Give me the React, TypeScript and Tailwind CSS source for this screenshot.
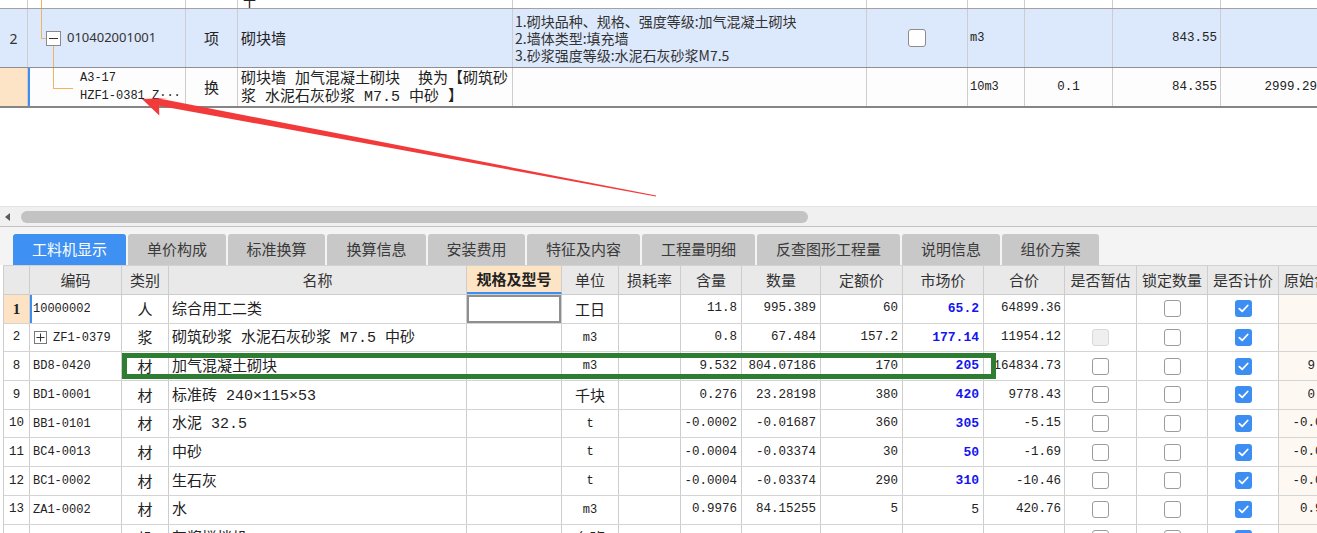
import React from 'react'

const TOP = ['w-[28px]', 'w-[158px]', 'w-[52px]', 'w-[275px]', 'w-[354px]', 'w-[101px]', 'w-[57px]', 'w-[88px]', 'w-[108px]', 'w-[100px]']
const BOT = ['w-[26px]', 'w-[92px]', 'w-[47px]', 'w-[298px]', 'w-[95px]', 'w-[57px]', 'w-[62px]', 'w-[61px]', 'w-[79px]', 'w-[82px]', 'w-[81px]', 'w-[81px]', 'w-[72px]', 'w-[71px]', 'w-[71px]', 'w-[68px]']

const MONO = "font-['Liberation_Mono','Noto_Sans_CJK_SC',monospace]"
const CJK = "font-['Noto_Sans_CJK_SC',sans-serif]"

function C({ w, className = '', children }: { w: string; className?: string; children?: React.ReactNode }) {
  return (
    <div className={`${w} shrink-0 h-full border-r border-[#cdcdcd] flex items-center overflow-hidden ${className}`}>
      {children}
    </div>
  )
}

function Check({ state }: { state: 'on' | 'off' | 'dis' | 'none' }) {
  if (state === 'none') return null
  if (state === 'on')
    return (
      <span className="w-[17px] h-[17px] rounded-[3px] bg-[#3c8ef3] flex items-center justify-center">
        <svg width="11" height="9" viewBox="0 0 11 9">
          <path d="M1.3 4.6 L4.2 7.3 L9.7 1.5" fill="none" stroke="white" strokeWidth="1.8" strokeLinecap="round" strokeLinejoin="round" />
        </svg>
      </span>
    )
  if (state === 'dis') return <span className="w-[17px] h-[17px] rounded-[3px] border border-[#d8d8d8] bg-[#efefef]" />
  return <span className="w-[17px] h-[17px] rounded-[3px] border border-[#9c9c9c] bg-white" />
}

type Row = {
  n: string; code: string; plus?: boolean; type: string; name: string; unit: string; unitCjk?: boolean
  hl: string; sl: string; de: string; sc: string; blue?: boolean; hj: string; zg: 'none' | 'off' | 'dis'; ys: string
}

const ROWS: Row[] = [
  { n: '1', code: '10000002', type: '人', name: '综合用工二类', unit: '工日', unitCjk: true, hl: '11.8', sl: '995.389', de: '60', sc: '65.2', blue: true, hj: '64899.36', zg: 'none', ys: '' },
  { n: '2', code: 'ZF1-0379', plus: true, type: '浆', name: '砌筑砂浆 水泥石灰砂浆 M7.5 中砂', unit: 'm3', hl: '0.8', sl: '67.484', de: '157.2', sc: '177.14', blue: true, hj: '11954.12', zg: 'dis', ys: '' },
  { n: '8', code: 'BD8-0420', type: '材', name: '加气混凝土砌块', unit: 'm3', hl: '9.532', sl: '804.07186', de: '170', sc: '205', blue: true, hj: '164834.73', zg: 'off', ys: '9.532' },
  { n: '9', code: 'BD1-0001', type: '材', name: '标准砖 240×115×53', unit: '千块', unitCjk: true, hl: '0.276', sl: '23.28198', de: '380', sc: '420', blue: true, hj: '9778.43', zg: 'off', ys: '0.276' },
  { n: '10', code: 'BB1-0101', type: '材', name: '水泥 32.5', unit: 't', hl: '-0.0002', sl: '-0.01687', de: '360', sc: '305', blue: true, hj: '-5.15', zg: 'off', ys: '-0.0002' },
  { n: '11', code: 'BC4-0013', type: '材', name: '中砂', unit: 't', hl: '-0.0004', sl: '-0.03374', de: '30', sc: '50', blue: true, hj: '-1.69', zg: 'off', ys: '-0.0004' },
  { n: '12', code: 'BC1-0002', type: '材', name: '生石灰', unit: 't', hl: '-0.0004', sl: '-0.03374', de: '290', sc: '310', blue: true, hj: '-10.46', zg: 'off', ys: '-0.0004' },
  { n: '13', code: 'ZA1-0002', type: '材', name: '水', unit: 'm3', hl: '0.9976', sl: '84.15255', de: '5', sc: '5', hj: '420.76', zg: 'off', ys: '0.9976' },
  { n: '', code: '', type: '机', name: '灰浆搅拌机', unit: '台班', unitCjk: true, hl: '', sl: '', de: '', sc: '', hj: '', zg: 'off', ys: '' },
]

const TABS = [
  { t: '工料机显示', w: 'w-[113px]' },
  { t: '单价构成', w: 'w-[98px]' },
  { t: '标准换算', w: 'w-[97px]' },
  { t: '换算信息', w: 'w-[99px]' },
  { t: '安装费用', w: 'w-[97px]' },
  { t: '特征及内容', w: 'w-[113px]' },
  { t: '工程量明细', w: 'w-[113px]' },
  { t: '反查图形工程量', w: 'w-[143px]' },
  { t: '说明信息', w: 'w-[98px]' },
  { t: '组价方案', w: 'w-[97px]' },
]

const HEAD = ['', '编码', '类别', '名称', '规格及型号', '单位', '损耗率', '含量', '数量', '定额价', '市场价', '合价', '是否暂估', '锁定数量', '是否计价', '原始含量']

export default function App() {
  return (
    <div className={`relative w-[1317px] h-[533px] overflow-hidden bg-white text-[#222] ${CJK}`}>
      {/* upper grid */}
      <div className="w-[1317px]">
        <div className="flex h-[9px] border-b border-[#a2a2a2]">
          <C w={TOP[0]} />
          <C w={TOP[1]} className="relative">
            <span className="absolute left-[13px] top-0 h-full w-px bg-[#f3b35e]" />
          </C>
          <C w={TOP[2]} />
          <C w={TOP[3]} className="items-end pl-[4px]">
            <span className="text-[15px] leading-[15px] -mb-[1px]">土</span>
          </C>
          <C w={TOP[4]} />
          <C w={TOP[5]} />
          <C w={TOP[6]} />
          <C w={TOP[7]} />
          <C w={TOP[8]} />
          <C w={TOP[9]} />
        </div>

        <div className="flex h-[59px] border-b border-[#8f8f8f] bg-[#dce8fb]">
          <C w={TOP[0]} className="justify-center text-[14px] font-['Noto_Sans',sans-serif] text-[#333]">2</C>
          <C w={TOP[1]} className="relative pl-[39px] text-[13px] font-['Noto_Sans',sans-serif] text-[#333]">
            <span className="absolute left-[13px] top-0 h-[29px] w-px bg-[#f3b35e]" />
            <span className="absolute left-[13px] top-[29px] h-px w-[5px] bg-[#f3b35e]" />
            <span className="absolute left-[25px] top-[37px] h-[22px] w-px bg-[#f3b35e]" />
            <span className="absolute left-[18px] top-[22px] w-[15px] h-[15px] border border-[#8a8a8a] bg-white flex items-center justify-center">
              <span className="w-[9px] h-px bg-[#333]" />
            </span>
            010402001001
          </C>
          <C w={TOP[2]} className="justify-center text-[15px]">项</C>
          <C w={TOP[3]} className="pl-[3px] text-[15px]">砌块墙</C>
          <C w={TOP[4]} className="pl-[2px] text-[14px] leading-[17px] text-[#333]">
            <div>
              <div>1.砌块品种、规格、强度等级:加气混凝土砌块</div>
              <div>2.墙体类型:填充墙</div>
              <div>3.砂浆强度等级:水泥石灰砂浆M7.5</div>
            </div>
          </C>
          <C w={TOP[5]} className="justify-center">
            <span className="w-[18px] h-[18px] rounded-[3px] border border-[#8c8c8c] bg-white" />
          </C>
          <C w={TOP[6]} className={`pl-[2px] text-[12px] ${MONO}`}>m3</C>
          <C w={TOP[7]} />
          <C w={TOP[8]} className={`justify-end pr-[3px] text-[12.5px] ${MONO}`}>843.55</C>
          <C w={TOP[9]} />
        </div>

        <div className="flex h-[40px] border-b-2 border-[#858585] bg-[#fdfdfd]">
          <C w={TOP[0]} className="bg-[#fde4c7]" />
          <C w={TOP[1]} className={`relative pl-[52px] text-[12px] leading-[18px] ${MONO}`}>
            <span className="absolute left-0 top-0 h-full w-[2px] bg-[#3d8ef0]" />
            <span className="absolute left-[25px] top-0 h-[20px] w-px bg-[#f3b35e]" />
            <span className="absolute left-[25px] top-[20px] h-px w-[20px] bg-[#f3b35e]" />
            <div>
              <div>A3-17</div>
              <div>HZF1-0381 Z···</div>
            </div>
          </C>
          <C w={TOP[2]} className="justify-center text-[15px]">换</C>
          <C w={TOP[3]} className={`pl-[3px] pt-[3px] text-[15px] leading-[18px] whitespace-pre ${MONO}`}>
            <div>
              <div>砌块墙 加气混凝土砌块  换为【砌筑砂</div>
              <div>浆 水泥石灰砂浆 M7.5 中砂 】</div>
            </div>
          </C>
          <C w={TOP[4]} />
          <C w={TOP[5]} />
          <C w={TOP[6]} className={`pl-[2px] text-[12px] ${MONO}`}>10m3</C>
          <C w={TOP[7]} className={`justify-center text-[12.5px] ${MONO}`}>0.1</C>
          <C w={TOP[8]} className={`justify-end pr-[3px] text-[12.5px] ${MONO}`}>84.355</C>
          <C w={TOP[9]} className={`justify-end pr-[3px] text-[12.5px] ${MONO}`}>2999.29</C>
        </div>
      </div>

      <div className="h-[98px]" />

      {/* horizontal scrollbar */}
      <div className="h-[21px] bg-[#f0f0f0] border-t border-[#e4e4e4] border-b border-b-[#c2c2c2] flex items-center pl-[5px]">
        <svg width="5" height="8" viewBox="0 0 5 8">
          <polygon points="5,0 5,8 0,4" fill="#5a5a5a" />
        </svg>
        <div className="ml-[11px] w-[787px] h-[12px] rounded-full bg-[#c3c3c3]" />
      </div>

      {/* tabs */}
      <div className="h-[38px] bg-[#f4f4f4] pt-[7px] pl-[13px] flex items-end gap-[2px]">
        {TABS.map((t, i) => (
          <div
            key={t.t}
            className={`${t.w} h-[31px] rounded-t-[3px] flex items-center justify-center text-[15px] ${i === 0 ? 'bg-[#3e90f2] text-white' : 'bg-[#c8c8c8] text-[#3a3a3a]'}`}
          >
            {t.t}
          </div>
        ))}
      </div>

      {/* lower grid */}
      <div className="pl-[3px]">
        <div className="flex h-[30px] border-t border-[#d2d2d2] border-b border-b-[#cdcdcd] bg-[#e9e9e9] text-[15px] text-[#333] border-l border-l-[#cdcdcd] w-[1344px]">
          {HEAD.map((h, i) => (
            <C
              key={i}
              w={BOT[i]}
              className={`justify-center whitespace-nowrap ${i === 4 ? 'bg-[#fde4c4] font-bold text-[#222] border-b-2 border-b-[#3c8ef3]' : ''} ${i === 15 ? 'justify-start pl-[5px]' : ''}`}
            >
              {h}
            </C>
          ))}
        </div>

        {ROWS.map((r, idx) => (
          <div key={idx} className="flex h-[28.7px] border-b border-[#d4d4d4] border-l border-l-[#cdcdcd] w-[1344px]">
            <C
              w={BOT[0]}
              className={`justify-center ${idx === 0 ? "bg-[#fde3c3] font-bold text-[15px] font-['Liberation_Serif',serif]" : `text-[12.5px] ${MONO}`}`}
            >
              {r.n}
            </C>
            <C w={BOT[1]} className={`relative pl-[3px] text-[12px] ${MONO}`}>
              {idx === 0 && <span className="absolute left-0 top-0 h-full w-[2px] bg-[#3d8ef0]" />}
              {r.plus && (
                <span className="ml-[1px] mr-[6px] w-[13px] h-[13px] border border-[#7a7a7a] bg-white flex items-center justify-center shrink-0">
                  <svg width="9" height="9" viewBox="0 0 9 9">
                    <path d="M0.5 4.5 H8.5 M4.5 0.5 V8.5" stroke="#333" strokeWidth="1" />
                  </svg>
                </span>
              )}
              {r.code}
            </C>
            <C w={BOT[2]} className="justify-center text-[15px]">{r.type}</C>
            <C w={BOT[3]} className={`pl-[3px] pt-[4px] text-[15px] whitespace-pre ${MONO}`}>{r.name}</C>
            <C w={BOT[4]} className="relative">
              {idx === 0 && <span className="absolute inset-0 border-2 border-[#8e8e8e]" />}
            </C>
            <C w={BOT[5]} className={`justify-center ${r.unitCjk ? 'text-[15px]' : `text-[12px] ${MONO}`}`}>{r.unit}</C>
            <C w={BOT[6]} />
            <C w={BOT[7]} className={`justify-end pr-[4px] text-[12.5px] ${MONO}`}>{r.hl}</C>
            <C w={BOT[8]} className={`justify-end pr-[4px] text-[12.5px] ${MONO}`}>{r.sl}</C>
            <C w={BOT[9]} className={`justify-end pr-[4px] text-[12.5px] ${MONO}`}>{r.de}</C>
            <C w={BOT[10]} className={`justify-end pr-[4px] text-[13px] ${MONO} ${r.blue ? 'text-[#1414f0] font-bold' : ''}`}>{r.sc}</C>
            <C w={BOT[11]} className={`justify-end pr-[3px] text-[12.5px] ${MONO}`}>{r.hj}</C>
            <C w={BOT[12]} className="justify-center"><Check state={r.zg} /></C>
            <C w={BOT[13]} className="justify-center"><Check state="off" /></C>
            <C w={BOT[14]} className="justify-center"><Check state="on" /></C>
            <C w={BOT[15]} className={`justify-end pr-[1px] bg-[#fdf8f2] text-[12.5px] ${MONO}`}>{r.ys}</C>
          </div>
        ))}
      </div>

      {/* annotation: green frame */}
      <div className="absolute left-[122px] top-[353px] w-[874px] h-[26px] border-[5px] border-[#2e7d32] pointer-events-none" />

      {/* annotation: red arrow */}
      <svg className="absolute left-0 top-0 pointer-events-none" width="1317" height="533" viewBox="0 0 1317 533">
        <polygon
          points="142,99 168.7,97.9 160.35,98.86 656.1,195.5 655.9,196.5 159.05,105.74 159.3,115.5"
          fill="#f33a3a"
        />
      </svg>
    </div>
  )
}
